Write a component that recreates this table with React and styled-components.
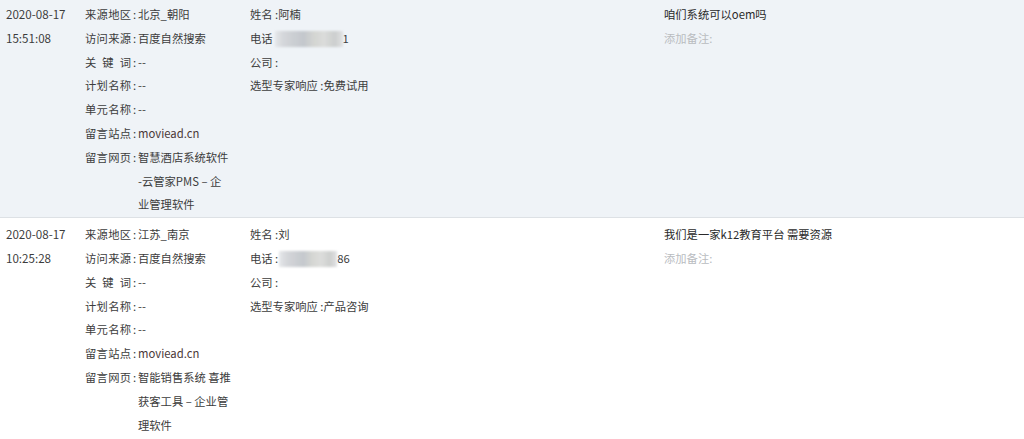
import React from 'react';
import styled, { createGlobalStyle } from 'styled-components';

const GlobalStyle = createGlobalStyle`
  * {
    margin: 0;
    padding: 0;
    box-sizing: border-box;
  }

  body {
    background: #fff;
    font-family: 'Noto Sans CJK SC', 'Noto Sans', sans-serif;
    font-size: 11.3px;
    color: #3c3c3c;
  }
`;

const List = styled.div`
  margin-top: -2px;
`;

const Row = styled.div`
  display: grid;
  grid-template-columns: 85px 165px 414px 1fr;
  padding: 5px 0 0;
  line-height: 23.8px;
  background: ${(p) => (p.$shaded ? '#eff3f7' : '#fff')};
  border-bottom: 1px solid ${(p) => (p.$shaded ? '#dde1e5' : 'transparent')};
`;

const DateCol = styled.div`
  padding-left: 6px;
  font-size: 11.6px;
`;

const Details = styled.div`
  display: flex;
  flex-direction: column;
`;

const Field = styled.div`
  display: flex;
  align-items: flex-start;
`;

const Label = styled.span`
  width: 46px;
  flex-shrink: 0;
  white-space: nowrap;
  text-align: justify;
  text-align-last: justify;
`;

const Colon = styled.span`
  width: 4px;
  margin-left: 2px;
  flex-shrink: 0;
`;

const Value = styled.div`
  padding-left: 1px;
  display: flex;
  flex-direction: column;
  white-space: nowrap;
  color: ${(p) => (p.$link ? '#4a3838' : '#3c3c3c')};
`;

const Contact = styled.div`
  display: flex;
  flex-direction: column;
`;

const ContactLine = styled.div`
  display: flex;
  align-items: center;
  white-space: pre;
`;

const Blur = styled.span`
  display: inline-block;
  width: ${(p) => p.$w}px;
  height: 16px;
  margin-left: ${(p) => p.$ml}px;
  background: linear-gradient(
    90deg,
    #e4e6e9 0%,
    #d2d4d8 12%,
    #c8cbcf 28%,
    #bfc3c8 42%,
    #d2d3cf 58%,
    #d9dad8 72%,
    #c9cbca 88%,
    #dfe0e2 100%
  );
  filter: blur(1px);
  opacity: 0.9;
`;

const Message = styled.div`
  display: flex;
  flex-direction: column;
`;

const Text = styled.div`
  color: #2a2a2a;
`;

const Note = styled.div`
  color: #b9bcbf;
`;

const rows = [
  {
    date: '2020-08-17',
    time: '15:51:08',
    region: '北京_朝阳',
    page: ['智慧酒店系统软件', '-云管家PMS – 企', '业管理软件'],
    name: '阿楠',
    phoneTail: '1',
    blur: { ml: 2, w: 68 },
    showColon: false,
    need: '免费试用',
    msg: '咱们系统可以oem吗',
    shaded: true,
  },
  {
    date: '2020-08-17',
    time: '10:25:28',
    region: '江苏_南京',
    page: ['智能销售系统 喜推', '获客工具 – 企业管', '理软件'],
    name: '刘',
    phoneTail: '86',
    blur: { ml: 1, w: 58 },
    showColon: true,
    need: '产品咨询',
    msg: '我们是一家k12教育平台 需要资源',
    shaded: false,
  },
];

const FieldRow = ({ label, children, link }) => (
  <Field>
    <Label>{label}</Label>
    <Colon>:</Colon>
    <Value $link={link}>{children}</Value>
  </Field>
);

export default function App() {
  return (
    <>
      <GlobalStyle />
      <List>
        {rows.map((r, i) => (
          <Row key={i} $shaded={r.shaded}>
            <DateCol>
              <div>{r.date}</div>
              <div>{r.time}</div>
            </DateCol>
            <Details>
              <FieldRow label="来源地区">{r.region}</FieldRow>
              <FieldRow label="访问来源">百度自然搜索</FieldRow>
              <FieldRow label="关键词">--</FieldRow>
              <FieldRow label="计划名称">--</FieldRow>
              <FieldRow label="单元名称">--</FieldRow>
              <FieldRow label="留言站点" link>
                moviead.cn
              </FieldRow>
              <FieldRow label="留言网页">
                {r.page.map((l, j) => (
                  <span key={j}>{l}</span>
                ))}
              </FieldRow>
            </Details>
            <Contact>
              <ContactLine>姓名 :{r.name}</ContactLine>
              <ContactLine>
                {r.showColon ? '电话 :' : '电话'}
                <Blur $w={r.blur.w} $ml={r.blur.ml} />
                {r.phoneTail}
              </ContactLine>
              <ContactLine>公司 :</ContactLine>
              <ContactLine>选型专家响应 :{r.need}</ContactLine>
            </Contact>
            <Message>
              <Text>{r.msg}</Text>
              <Note>添加备注:</Note>
            </Message>
          </Row>
        ))}
      </List>
    </>
  );
}
